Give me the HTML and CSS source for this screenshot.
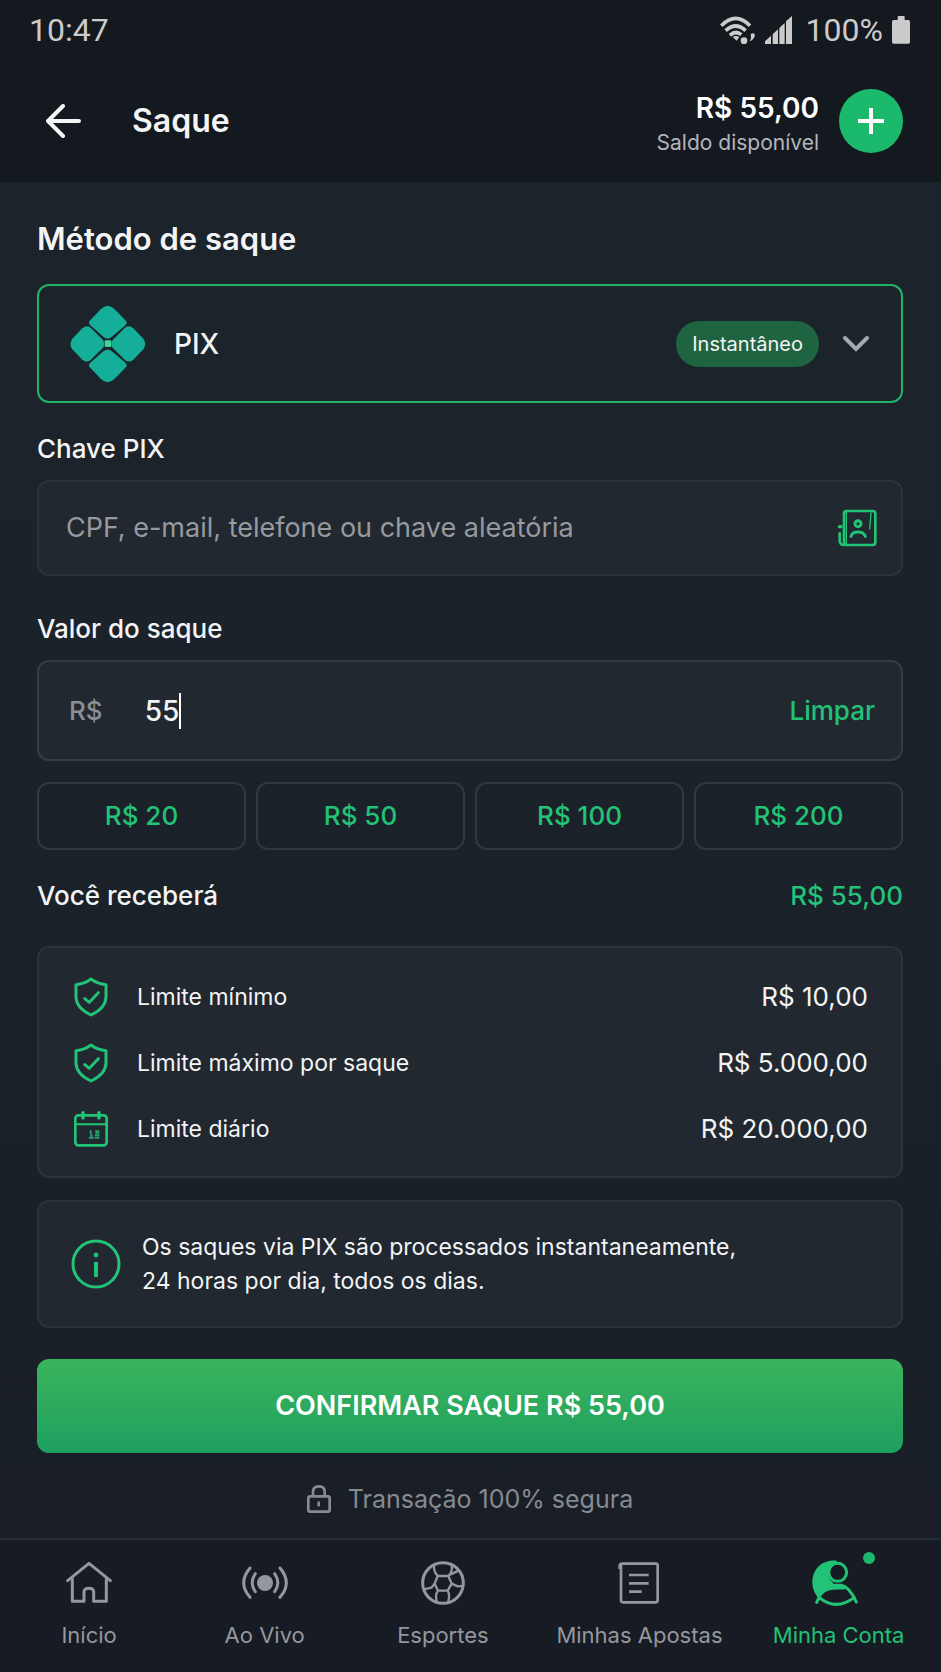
FILE: index.html
```html
<!DOCTYPE html>
<html lang="pt-BR">
<head>
    <meta charset="UTF-8">
    <meta name="viewport" content="width=device-width, initial-scale=1.0">
    <title>Saque</title>
    <link rel="stylesheet" href="styles.css">
</head>
<body>
    <header class="header">
        <div class="status-bar">
            <span>10:47</span>
            <div class="status-icons">
                <svg width="36" height="29" viewBox="352 40 108 87" fill="none" stroke="currentColor" stroke-width="11">
                    <path d="M356 69Q399 25 442 69M369 84Q399 56 429 84M382 98Q399 82 416 96"/>
                    <path d="M390 103Q400 97 410 103L402 114Z" fill="currentColor" stroke="none"/>
                    <circle cx="424" cy="114" r="10" fill="currentColor" stroke="none"/>
                    <path d="M444 94Q458 88 456 101Q453 112 441 116Q447 108 444 94Z" fill="currentColor" stroke="none"/>
                </svg>
                <svg class="signal" width="27" height="28" viewBox="492 42 81 84" fill="currentColor">
                    <path d="M492 118L510 101V126H492ZM515 97L531 82V126H515ZM535 78L551 63V126H535ZM555 58L573 42V126H555Z"/>
                </svg>
                <span>100%</span>
                <svg width="18" height="28" viewBox="876 43 54 84" fill="currentColor">
                    <path d="M893 56V46Q893 43 896 43H911Q914 43 914 46V56Z"/>
                    <rect x="876" y="55" width="54" height="71" rx="5"/>
                </svg>
            </div>
        </div>
        <div class="top-bar">
            <a href="#" class="back" aria-label="Voltar">
                <svg width="36" height="34" viewBox="0 0 36 34" fill="none" stroke="currentColor" stroke-width="4" stroke-linecap="round" stroke-linejoin="round">
                    <path d="M17 2L2 17L17 32M2 17H33"/>
                </svg>
            </a>
            <h1>Saque</h1>
            <div class="balance">
                <strong>R$ 55,00</strong>
                <span>Saldo disponível</span>
            </div>
            <button type="button" class="add" aria-label="Depositar">
                <svg width="26" height="26" viewBox="0 0 26 26" stroke="currentColor" stroke-width="4">
                    <path d="M13 0V26M0 13H26"/>
                </svg>
            </button>
        </div>
    </header>

    <main class="content">
        <h2><label for="metodo">Método de saque</label></h2>
        <div class="box method">
            <svg class="pix" width="76" height="78" viewBox="151 283 228 234" fill="#15ae98">
                <path d="M209 332L243 296Q264 275 285 296L320 332Q323 339 317 344L276 379Q264 388 252 379L212 344Q206 339 209 332Z"/>
                <path d="M209 468L243 504Q264 525 285 504L320 468Q323 461 317 456L276 421Q264 412 252 421L212 456Q206 461 209 468Z"/>
                <path d="M188 353Q201 342 213 351L250 388Q257 400 250 411L213 448Q201 458 188 447L158 416Q147 400 158 384Z"/>
                <path d="M341 353Q328 342 316 351L279 388Q272 400 279 411L316 448Q328 458 341 447L371 416Q382 400 371 384Z"/>
                <rect x="255" y="389" width="20" height="20" rx="3" fill="#3fd3a0"/>
            </svg>
            <select id="metodo">
                <option>PIX</option>
            </select>
            <span class="tag">Instantâneo</span>
            <svg class="chevron" width="28" height="18" viewBox="0 0 28 18" fill="none" stroke="currentColor" stroke-width="4" stroke-linecap="round">
                <path d="M3 3L14 14L25 3"/>
            </svg>
        </div>

        <label class="label" for="chave">Chave PIX</label>
        <div class="box key">
            <input type="text" id="chave" placeholder="CPF, e-mail, telefone ou chave aleatória">
            <button type="button" class="contacts" aria-label="Contatos">
                <svg width="40" height="38" viewBox="589 718 120 114" fill="none" stroke="currentColor" stroke-width="8" stroke-linecap="round">
                    <rect x="610" y="724" width="94" height="102" rx="8"/>
                    <path d="M617 728V822" stroke-width="4"/>
                    <path d="M597 791V814Q598 826 610 826"/>
                    <path d="M596 771H601" stroke-width="10"/>
                    <circle cx="652" cy="762" r="9" stroke-width="9"/>
                    <path d="M631 800Q635 787 652 787Q669 787 674 800" stroke-width="9"/>
                    <path d="M691 730L687 778" stroke-width="4"/>
                </svg>
            </button>
        </div>

        <label class="label" for="valor">Valor do saque</label>
        <div class="box amount">
            <span class="currency">R$</span>
            <div class="value">
                <input type="text" id="valor" inputmode="numeric" value="55">
                <i class="caret"></i>
            </div>
            <button type="button" class="clear">Limpar</button>
        </div>

        <div class="chips">
            <button type="button">R$ 20</button>
            <button type="button">R$ 50</button>
            <button type="button">R$ 100</button>
            <button type="button">R$ 200</button>
        </div>

        <div class="receive">
            <span>Você receberá</span>
            <strong>R$ 55,00</strong>
        </div>

        <dl class="box limits">
            <div>
                <svg width="34" height="40" viewBox="162 113 102 120" fill="none" stroke="currentColor" stroke-width="9" stroke-linecap="round" stroke-linejoin="round">
                    <path d="M213 119Q233 134 258 136V173Q257 207 213 227Q169 207 168 173V136Q193 134 213 119Z"/>
                    <path d="M194 178L208 189L235 160"/>
                </svg>
                <dt>Limite mínimo</dt>
                <dd>R$ 10,00</dd>
            </div>
            <div>
                <svg width="34" height="40" viewBox="162 113 102 120" fill="none" stroke="currentColor" stroke-width="9" stroke-linecap="round" stroke-linejoin="round">
                    <path d="M213 119Q233 134 258 136V173Q257 207 213 227Q169 207 168 173V136Q193 134 213 119Z"/>
                    <path d="M194 178L208 189L235 160"/>
                </svg>
                <dt>Limite máximo por saque</dt>
                <dd>R$ 5.000,00</dd>
            </div>
            <div>
                <svg width="34" height="36" viewBox="162 513 102 108" fill="none" stroke="currentColor" stroke-width="8" stroke-linecap="round">
                    <rect x="166" y="526" width="94" height="90" rx="9"/>
                    <path d="M169 553H258" stroke-width="6"/>
                    <path d="M189 518V534M237 518V534" stroke-width="10"/>
                    <path d="M212 573V579M229 573V579M235 573V579M214 583V592M209 593H219M227 586H236M227 593H236" stroke-width="6" opacity="0.8"/>
                </svg>
                <dt>Limite diário</dt>
                <dd>R$ 20.000,00</dd>
            </div>
        </dl>

        <div class="box info">
            <svg width="50" height="50" viewBox="0 0 50 50" fill="none" stroke="currentColor">
                <circle cx="25" cy="25" r="23" stroke-width="3"/>
                <circle cx="25" cy="16" r="2" fill="currentColor"/>
                <path d="M25 23V38" stroke-width="4"/>
            </svg>
            <p>Os saques via PIX são processados instantaneamente,<br>24 horas por dia, todos os dias.</p>
        </div>

        <button type="submit" class="confirm">CONFIRMAR SAQUE R$ 55,00</button>

        <p class="secure">
            <svg width="24" height="28" viewBox="140 404 72 84" fill="none" stroke="currentColor" stroke-width="8">
                <rect x="144" y="438" width="64" height="46" rx="5"/>
                <path d="M158 437V424Q158 408 176 408Q193 408 193 424V437"/>
                <path d="M175 457V465" stroke-linecap="round"/>
            </svg>
            Transação 100% segura
        </p>
    </main>

    <nav class="nav">
        <a href="#">
            <svg width="46" height="46" viewBox="140 60 138 138" fill="none" stroke="currentColor" stroke-width="9" stroke-linecap="round" stroke-linejoin="round">
                <path d="M145 122L209 70L273 122"/>
                <path d="M159 118V184H194V155Q195 145 209 145Q222 145 223 155V184H261V118"/>
            </svg>
            Início
        </a>
        <a href="#">
            <svg width="46" height="46" viewBox="668 60 138 138" fill="none" stroke="currentColor" stroke-width="9" stroke-linecap="round">
                <circle cx="737" cy="129" r="24" fill="currentColor" stroke="none"/>
                <path d="M708 101Q689 129 708 155M766 101Q785 129 766 155M692 84Q654 129 692 172M782 84Q820 129 782 172"/>
            </svg>
            Ao Vivo
        </a>
        <a href="#">
            <svg width="46" height="46" viewBox="122 59 138 138" fill="none" stroke="currentColor" stroke-width="7" stroke-linejoin="round">
                <circle cx="191" cy="128" r="61" stroke-width="9"/>
                <path d="M175 107H207L217 130L205 151H176L166 130Z"/>
                <path d="M175 107Q162 92 164 76M207 107Q221 93 217 73M212 103L238 91M217 130L235 138L252 137M205 151Q213 164 206 187M176 151Q166 164 173 187M166 130L156 142L131 148"/>
            </svg>
            Esportes
        </a>
        <a href="#">
            <svg width="46" height="46" viewBox="706 59 138 138" fill="none" stroke="currentColor" stroke-width="8">
                <path d="M717 86V76Q718 70 725 70H825Q831 70 831 76V180Q831 186 825 186H727Q721 186 721 180V72"/>
                <path d="M745 104H804M745 129H804M745 154H783"/>
            </svg>
            Minhas Apostas
        </a>
        <a href="#" class="active">
            <svg width="46" height="46" viewBox="393 90 138 138" fill="none" stroke="currentColor" stroke-width="9" stroke-linecap="round" stroke-linejoin="round">
                <path d="M467 92C423 88 393 118 394 160Q395 185 412 204Q422 186 436 180Q446 176 456 176V157Q440 147 441 128Q443 106 467 98Z" fill="currentColor" stroke="none"/>
                <circle cx="470" cy="127" r="27"/>
                <path d="M457 166H482Q504 170 526 216M407 217L417 196Q428 175 465 174H488M414 202Q465 244 520 202"/>
            </svg>
            Minha Conta
            <i class="dot"></i>
        </a>
    </nav>
</body>
</html>
```
FILE: styles.css
```css
* {
    margin: 0;
    padding: 0;
    box-sizing: border-box;
}
body {
    display: flex;
    flex-direction: column;
    min-height: 100vh;
    background: linear-gradient(#1c242b, #1b2129 60%, #191e26);
    color: #f3f4f5;
    font-family: Inter, sans-serif;
    font-size: 26px;
    line-height: 36px;
}
svg {
    display: block;
    flex: none;
}
button,
input,
select {
    background: none;
    border: 0;
    outline: 0;
    color: inherit;
    font: inherit;
}
button {
    cursor: pointer;
}
a {
    color: inherit;
    text-decoration: none;
}

/* header */
.header {
    background: #14181f;
}
.status-bar {
    display: flex;
    justify-content: space-between;
    align-items: center;
    height: 60px;
    padding: 0 31px 0 29px;
    color: #cccbcb;
    font-family: Roboto, sans-serif;
    font-size: 32px;
}
.status-icons {
    display: flex;
    align-items: center;
    gap: 9px;
}
.signal {
    margin-right: 5px;
}
.top-bar {
    display: flex;
    align-items: center;
    height: 122px;
    padding: 0 38px 0 46px;
}
.top-bar h1 {
    margin-left: 50px;
    font-size: 32px;
    font-weight: 600;
}
.balance {
    display: flex;
    flex-direction: column;
    margin-left: auto;
    padding-top: 7px;
    text-align: right;
}
.balance strong {
    font-size: 28px;
    font-weight: 600;
    color: #fff;
}
.balance span {
    color: #b3b6bb;
    font-size: 21px;
    line-height: 34px;
}
.add {
    display: flex;
    justify-content: center;
    align-items: center;
    width: 64px;
    height: 64px;
    margin-left: 20px;
    border-radius: 50%;
    background: #1bb96c;
    color: #fff;
}

/* form */
.content {
    flex: 1;
    padding: 38px 38px 20px 37px;
}
.content h2 {
    margin-bottom: 26px;
    font-size: 31px;
    font-weight: 600;
    line-height: 38px;
}
.box {
    display: flex;
    align-items: center;
    border: 2px solid #2c333c;
    border-radius: 12px;
    background: #212830;
}
.method {
    height: 119px;
    padding: 0 31px;
    border-color: #22b26b;
    background: #1c242b;
}
.method select {
    flex: 1;
    min-width: 0;
    margin-left: 28px;
    appearance: none;
    font-size: 28px;
    font-weight: 500;
}
.tag {
    margin-right: 23px;
    padding: 5px 16px;
    border-radius: 23px;
    background: #1f6440;
    font-size: 20px;
}
.chevron {
    color: #a5a8ac;
}
.label {
    display: block;
    margin: 35px 0 13px;
    font-weight: 500;
}
.method + .label {
    margin-top: 28px;
}
.key {
    height: 96px;
    padding: 0 24px 0 27px;
}
.key input {
    flex: 1;
    min-width: 0;
    font-size: 27px;
}
.key input::placeholder {
    color: #969a9f;
    opacity: 1;
}
.contacts,
.clear,
.limits,
.info svg {
    color: #22c277;
}
.amount {
    height: 101px;
    padding: 0 26px 0 30px;
    border-color: #353c46;
}
.currency {
    color: #8b8f95;
    font-weight: 500;
}
.value {
    display: flex;
    align-items: center;
    flex: 1;
    margin-left: 42px;
}
.value input {
    width: 34px;
    font-size: 28px;
    font-weight: 500;
}
.caret {
    width: 2px;
    height: 36px;
    background: #fff;
}
.clear {
    font-weight: 500;
}
.chips {
    display: grid;
    grid-template-columns: repeat(4, 1fr);
    gap: 10px;
    margin-top: 21px;
}
.chips button {
    height: 68px;
    border: 2px solid #313842;
    border-radius: 12px;
    color: #22c277;
    font-weight: 500;
}
.receive {
    display: flex;
    justify-content: space-between;
    margin: 28px 0 32px;
    font-weight: 500;
}
.receive strong {
    color: #22c277;
    font-weight: 500;
}

/* limits and notice */
.limits {
    display: block;
    padding: 16px 33px 14px 35px;
}
.limits div {
    display: flex;
    align-items: center;
    height: 66px;
}
.limits dt {
    margin-left: 29px;
    color: #f3f4f5;
    font-size: 23px;
}
.limits dd {
    margin-left: auto;
    color: #f3f4f5;
}
.info {
    height: 128px;
    margin-top: 22px;
    padding: 0 32px;
}
.info p {
    margin-left: 21px;
    font-size: 23px;
    line-height: 34px;
}
.confirm {
    display: block;
    width: 100%;
    height: 94px;
    margin: 31px 0 28px;
    border-radius: 12px;
    background: linear-gradient(#3ab55c, #1e9f60);
    color: #fff;
    font-size: 27px;
    font-weight: 600;
}
.secure {
    display: flex;
    justify-content: center;
    align-items: center;
    gap: 17px;
    color: #868a91;
    font-size: 25px;
}

/* bottom navigation */
.nav {
    display: grid;
    grid-template-columns: 34fr 33fr 35fr 40fr 36fr;
    height: 134px;
    padding: 20px 8px 0 0;
    border-top: 2px solid #252b34;
    background: #171c24;
    color: #94979d;
    font-size: 22px;
}
.nav a {
    display: flex;
    flex-direction: column;
    align-items: center;
    gap: 11px;
    position: relative;
    white-space: nowrap;
}
.nav .active {
    color: #22c277;
}
.active svg {
    margin-right: 8px;
}
.dot {
    position: absolute;
    top: -8px;
    left: calc(50% + 24px);
    width: 12px;
    height: 12px;
    border-radius: 50%;
    background: #1bb96c;
}
```
